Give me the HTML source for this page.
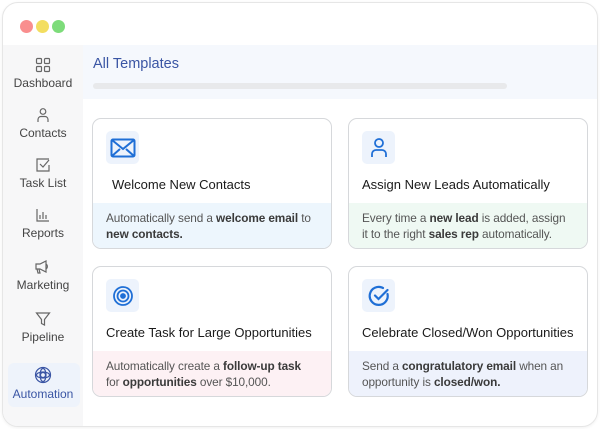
<!DOCTYPE html>
<html><head><meta charset="utf-8"><style>
*{margin:0;padding:0;box-sizing:border-box}
body{width:600px;height:429px;background:#fff;font-family:"Liberation Sans",Arial,sans-serif;position:relative;overflow:hidden}
.win{position:absolute;left:2px;top:2px;width:596px;height:425px;border:1px solid #e6e6e6;border-radius:16px;overflow:hidden;background:#fff;box-shadow:0 1px 3px rgba(0,0,0,.06)}
.dot{position:absolute;top:17px;width:13px;height:13px;border-radius:50%}
.side{position:absolute;left:0;top:42px;width:80px;height:385px;background:#f7f7f8}
.item{position:absolute;left:0;width:80px;text-align:center;font-size:12px;color:#444}
.item svg{display:block;margin:0 auto 3px}
.auto{position:absolute;left:5px;top:318px;width:72px;height:44px;background:#eef3fb;border-radius:6px}
.hdr{position:absolute;left:80px;top:42px;width:516px;height:54px;background:#f5f8fd}
.hdr h1{position:absolute;left:10px;top:11px;font-size:14.5px;font-weight:normal;color:#3a55a4}
.bar{position:absolute;left:10px;top:38px;width:414px;height:6px;border-radius:3px;background:#e8e9eb}
.card{position:absolute;width:240px;height:131px;border:1px solid #d6d8db;border-radius:9px;overflow:hidden;background:#fff}
.ic{position:absolute;left:13px;top:12px;width:33px;height:33px;background:#edf3fc;border-radius:5px;display:flex;align-items:center;justify-content:center}
.t{position:absolute;left:13px;top:58px;font-size:13px;color:#1a1a1a;white-space:nowrap}
.d{position:absolute;left:0;top:84px;width:100%;height:47px;padding:7px 0 0 13px;font-size:11.8px;line-height:16px;color:#555;white-space:nowrap;letter-spacing:-0.1px}
.d b{font-weight:bold;color:#3a3a3a}
</style></head><body>
<div class="win">
<div class="dot" style="left:17px;background:#f98e8e"></div>
<div class="dot" style="left:33px;background:#f3de60"></div>
<div class="dot" style="left:49px;background:#7ddc7a"></div>
<div class="side">
<div class="auto"></div>
<div class="item" style="top:12px"><svg width="16" height="16" viewBox="0 0 16 16" fill="none" stroke="#666" stroke-width="1.2"><rect x="1.5" y="1.5" width="5" height="5" rx="1"/><rect x="9.5" y="1.5" width="5" height="5" rx="1"/><rect x="1.5" y="9.5" width="5" height="5" rx="1"/><rect x="9.5" y="9.5" width="5" height="5" rx="1"/></svg>Dashboard</div>
<div class="item" style="top:62px"><svg width="16" height="16" viewBox="0 0 16 16" fill="none" stroke="#666" stroke-width="1.2"><circle cx="8" cy="4.5" r="2.8"/><path d="M3 15v-2.5a3 3 0 0 1 3-3h4a3 3 0 0 1 3 3V15"/></svg>Contacts</div>
<div class="item" style="top:112px"><svg width="16" height="16" viewBox="0 0 16 16" fill="none" stroke="#666" stroke-width="1.2"><path d="M14 2H2v12h12V8"/><path d="M5 7l3 3 6-7"/></svg>Task List</div>
<div class="item" style="top:162px"><svg width="16" height="16" viewBox="0 0 16 16" fill="none" stroke="#666" stroke-width="1.2"><path d="M2 2v12h12M5 12V8M8 12V5M11 12V8"/></svg>Reports</div>
<div class="item" style="top:214px"><svg width="18" height="16" viewBox="0 0 18 16" fill="none" stroke="#666" stroke-width="1.2"><path d="M2 5h4l6-3v11l-6-3H2z"/><path d="M3 10l1 4h2l-1-4M12 5a3 3 0 0 1 0 5"/></svg>Marketing</div>
<div class="item" style="top:266px"><svg width="16" height="16" viewBox="0 0 16 16" fill="none" stroke="#666" stroke-width="1.2"><path d="M1.5 2h13L9.5 8.5V14l-3-1.5v-4z"/></svg>Pipeline</div>
<div class="item" style="top:321px;color:#3a55a4"><svg width="18" height="18" viewBox="0 0 18 18" fill="none" stroke="#3a55a4" stroke-width="1.2"><circle cx="9" cy="9" r="7.5"/><circle cx="9" cy="9" r="2.5"/><ellipse cx="9" cy="9" rx="6.5" ry="3"/><ellipse cx="9" cy="9" rx="3" ry="6.5"/></svg>Automation</div>
</div>
<div class="hdr"><h1>All Templates</h1><div class="bar"></div></div>

<div class="card" style="left:89px;top:115px"><div class="ic"><svg width="26" height="20" viewBox="0 0 26 20" fill="none" stroke="#1f6fd6" stroke-width="2"><rect x="1.5" y="1.5" width="23" height="17" rx="1.5"/><path d="M2 2l11 9 11-9M2 18l8-7M24 18l-8-7"/></svg></div>
<div class="t" style="left:19px">Welcome New Contacts</div>
<div class="d" style="background:#edf6fd">Automatically send a <b>welcome email</b> to<br><b>new contacts.</b></div></div>

<div class="card" style="left:345px;top:115px"><div class="ic"><svg width="20" height="22" viewBox="0 0 20 22" fill="none" stroke="#1f6fd6" stroke-width="1.8"><circle cx="10" cy="6" r="4"/><path d="M3 20v-3a4 4 0 0 1 4-4h6a4 4 0 0 1 4 4v3"/></svg></div>
<div class="t">Assign New Leads Automatically</div>
<div class="d" style="background:#eff9f3">Every time a <b>new lead</b> is added, assign<br>it to the right <b>sales rep</b> automatically.</div></div>

<div class="card" style="left:89px;top:263px"><div class="ic"><svg width="22" height="22" viewBox="0 0 22 22" fill="none" stroke="#1f6fd6" stroke-width="1.8"><circle cx="11" cy="11" r="9"/><circle cx="11" cy="11" r="5.5"/><circle cx="11" cy="11" r="2" fill="#1f6fd6"/></svg></div>
<div class="t">Create Task for Large Opportunities</div>
<div class="d" style="background:#fdf1f4">Automatically create a <b>follow-up task</b><br>for <b>opportunities</b> over $10,000.</div></div>

<div class="card" style="left:345px;top:263px"><div class="ic"><svg width="22" height="22" viewBox="0 0 22 22" fill="none" stroke="#1f6fd6" stroke-width="2.2" stroke-linecap="round"><path d="M19.5 9A9 9 0 1 1 15 3"/><path d="M7 10.5l3.5 3.5 9-9"/></svg></div>
<div class="t">Celebrate Closed/Won Opportunities</div>
<div class="d" style="background:#eef2fc">Send a <b>congratulatory email</b> when an<br>opportunity is <b>closed/won.</b></div></div>
</div>
</body></html>
